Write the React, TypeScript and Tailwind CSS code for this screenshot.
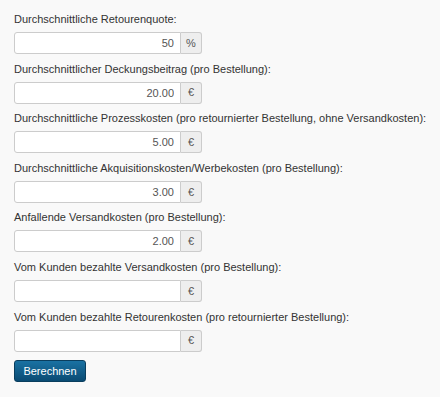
const FIELDS: Array<{ label: string; value: string; unit: string }> = [
  { label: "Durchschnittliche Retourenquote:", value: "50", unit: "%" },
  { label: "Durchschnittlicher Deckungsbeitrag (pro Bestellung):", value: "20.00", unit: "€" },
  {
    label: "Durchschnittliche Prozesskosten (pro retournierter Bestellung, ohne Versandkosten):",
    value: "5.00",
    unit: "€",
  },
  { label: "Durchschnittliche Akquisitionskosten/Werbekosten (pro Bestellung):", value: "3.00", unit: "€" },
  { label: "Anfallende Versandkosten (pro Bestellung):", value: "2.00", unit: "€" },
  { label: "Vom Kunden bezahlte Versandkosten (pro Bestellung):", value: "", unit: "€" },
  { label: "Vom Kunden bezahlte Retourenkosten (pro retournierter Bestellung):", value: "", unit: "€" },
];

export default function App() {
  return (
    <div className="min-h-[397px] bg-[#f9f9f9] px-[14px] pt-[12px] font-[family-name:Liberation_Sans,Arial,sans-serif] text-[11px] text-[#333]">
      {FIELDS.map((f) => (
        <div key={f.label} className="mb-[7.6px]">
          <label className="block whitespace-nowrap leading-[15px] mb-[5px]">{f.label}</label>
          <div className="flex w-[188px] h-[22px]">
            <input
              defaultValue={f.value}
              className="w-[167px] h-full rounded-l-[3px] border border-[#ccc] bg-white px-[6px] text-right text-[11px] text-[#555] outline-none"
            />
            <span className="flex w-[21px] items-center justify-center rounded-r-[3px] border border-l-0 border-[#ccc] bg-[#eee] text-[11px] text-[#555]">
              {f.unit}
            </span>
          </div>
        </div>
      ))}
      <button className="mt-[1px] h-[22px] w-[72px] rounded-[3px] border border-[#0a3e5e] bg-gradient-to-b from-[#1a72a3] to-[#0a4b73] text-[11px] text-white">
        Berechnen
      </button>
    </div>
  );
}
